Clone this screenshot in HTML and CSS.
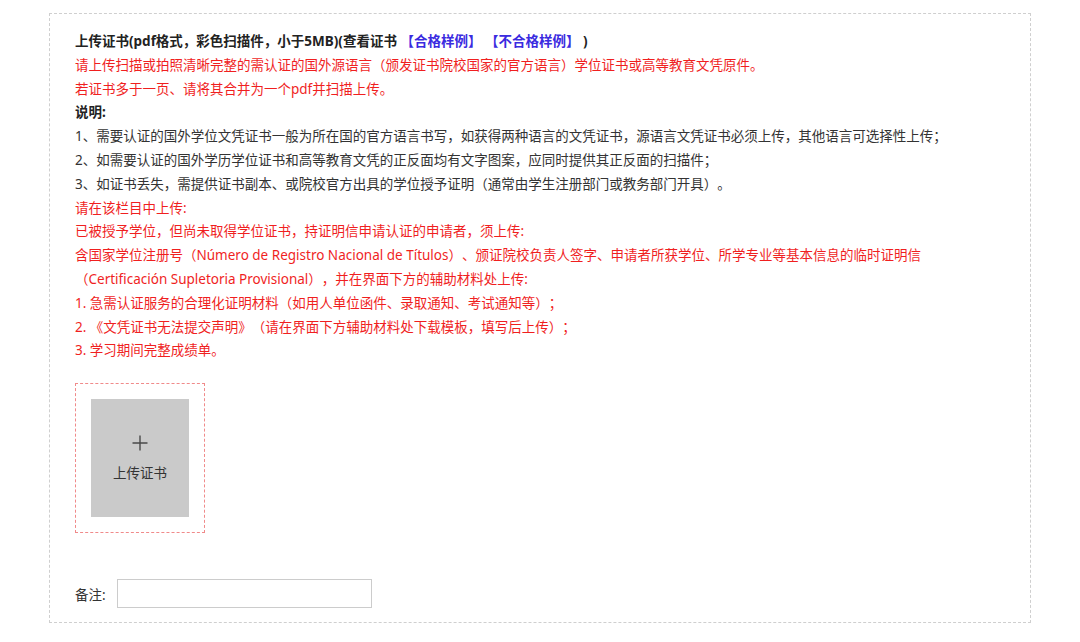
FILE: index.html
```html
<!DOCTYPE html>
<html lang="zh-CN">
<head>
<meta charset="utf-8">
<title>上传证书</title>
<link rel="stylesheet" href="styles.css">
</head>
<body>
<div class="panel">
  <div class="lines">
    <div class="line strong">上传证书(pdf格式，彩色扫描件，小于5MB)(查看证书 <span class="link">【合格样例】</span> <span class="link">【不合格样例】</span> )</div>
    <div class="line red">请上传扫描或拍照清晰完整的需认证的国外源语言（颁发证书院校国家的官方语言）学位证书或高等教育文凭原件。</div>
    <div class="line red">若证书多于一页、请将其合并为一个pdf并扫描上传。</div>
    <div class="line strong">说明:</div>
    <div class="line">1、需要认证的国外学位文凭证书一般为所在国的官方语言书写，如获得两种语言的文凭证书，源语言文凭证书必须上传，其他语言可选择性上传；</div>
    <div class="line">2、如需要认证的国外学历学位证书和高等教育文凭的正反面均有文字图案，应同时提供其正反面的扫描件；</div>
    <div class="line">3、如证书丢失，需提供证书副本、或院校官方出具的学位授予证明（通常由学生注册部门或教务部门开具）。</div>
    <div class="line red">请在该栏目中上传:</div>
    <div class="line red">已被授予学位，但尚未取得学位证书，持证明信申请认证的申请者，须上传:</div>
    <div class="line red">含国家学位注册号（Número de Registro Nacional de Títulos）、颁证院校负责人签字、申请者所获学位、所学专业等基本信息的临时证明信</div>
    <div class="line red">（Certificación Supletoria Provisional），并在界面下方的辅助材料处上传:</div>
    <div class="line red">1. 急需认证服务的合理化证明材料（如用人单位函件、录取通知、考试通知等）；</div>
    <div class="line red">2. 《文凭证书无法提交声明》（请在界面下方辅助材料处下载模板，填写后上传）；</div>
    <div class="line red">3. 学习期间完整成绩单。</div>
  </div>
  <div class="upload">
    <div class="upload-inner">
      <svg class="plus" width="16" height="16" viewBox="0 0 16 16" aria-hidden="true">
        <path d="M8 0.5 V15.5 M0.5 8 H15.5" stroke="#4a4a4a" stroke-width="1.4" fill="none"/>
      </svg>
      <span class="upload-text">上传证书</span>
    </div>
  </div>
  <div class="remark">
    <label class="remark-label">备注:</label>
    <input class="remark-input" type="text">
  </div>
</div>
</body>
</html>
```

FILE: styles.css
```css
html, body {
  margin: 0;
  padding: 0;
  background: #ffffff;
}

body {
  font-family: "Noto Sans", "Noto Sans CJK SC", sans-serif;
  font-size: 13.5px;
  color: #333333;
  text-spacing-trim: space-all;
}

.panel {
  box-sizing: border-box;
  width: 982px;
  margin: 13px 0 0 49px;
  padding: 16px 25px 14px 25px;
  border: 1px dashed #cfcfcf;
}

.line {
  line-height: 23.8px;
  height: 23.8px;
  white-space: nowrap;
}

.strong {
  font-weight: 700;
  color: #222222;
}

.link {
  color: #3a2be0;
}

.red {
  color: #f01f1f;
}

.upload {
  box-sizing: border-box;
  width: 130px;
  height: 150px;
  margin-top: 20px;
  padding: 15px;
  border: 1px dashed #f08a8a;
}

.upload-inner {
  width: 98px;
  height: 118px;
  background: #cacaca;
  display: flex;
  flex-direction: column;
  align-items: center;
  justify-content: center;
  color: #333333;
}

.plus {
  display: block;
}

.upload-text {
  font-size: 13.5px;
  line-height: 16px;
  margin-top: 14px;
}

.remark {
  display: flex;
  align-items: center;
  margin-top: 46px;
}

.remark-label {
  width: 42px;
  color: #333333;
}

.remark-input {
  box-sizing: border-box;
  width: 255px;
  height: 29px;
  margin: 0;
  padding: 0 6px;
  border: 1px solid #cccccc;
  outline: none;
  font: inherit;
}
```
